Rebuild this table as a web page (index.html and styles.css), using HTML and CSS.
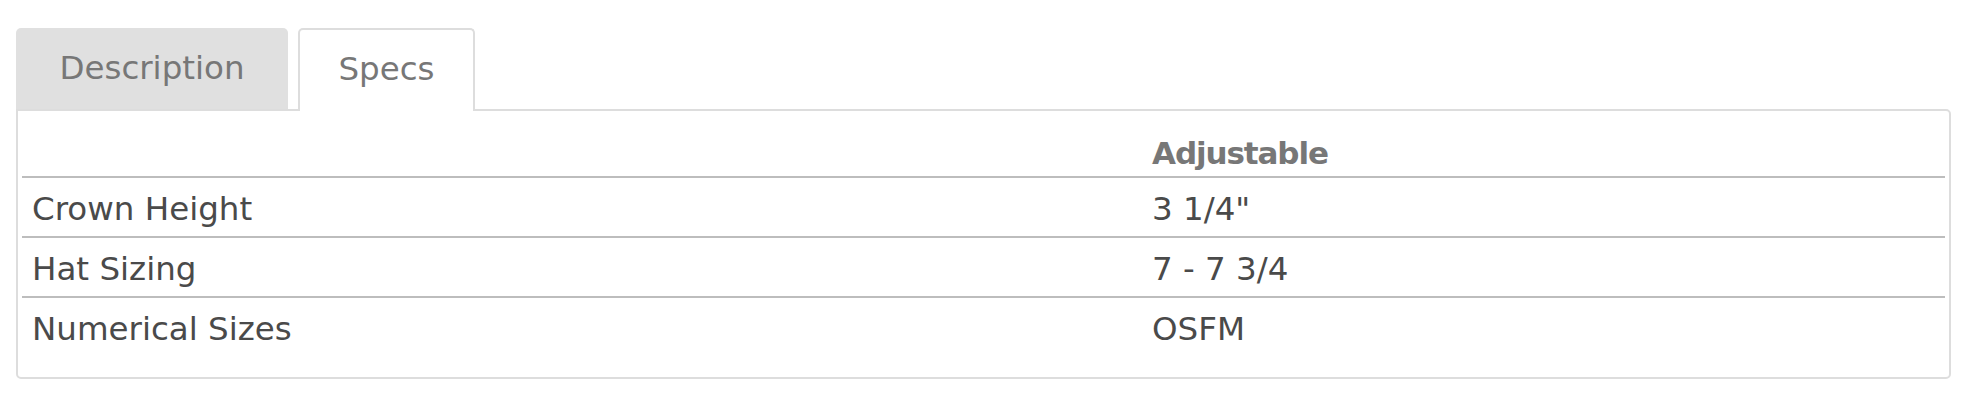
FILE: index.html
```html
<!DOCTYPE html>
<html lang="en">
<head>
<meta charset="utf-8">
<title>Specs</title>
<link rel="stylesheet" href="styles.css">
</head>
<body>
<div class="product-tabs">
  <ul class="tab-list">
    <li class="tab">Description</li>
    <li class="tab tab-active">Specs</li>
  </ul>
  <div class="tab-panel">
    <table class="spec-table">
      <thead>
        <tr><th class="col-label"></th><th class="col-value">Adjustable</th></tr>
      </thead>
      <tbody>
        <tr><td>Crown Height</td><td>3 1/4"</td></tr>
        <tr><td>Hat Sizing</td><td>7 - 7 3/4</td></tr>
        <tr><td>Numerical Sizes</td><td>OSFM</td></tr>
      </tbody>
    </table>
  </div>
</div>
</body>
</html>
```
FILE: styles.css
```css
html, body {
  margin: 0;
  padding: 0;
  background: #ffffff;
}
body {
  font-family: "DejaVu Sans", "Open Sans", sans-serif;
}
.product-tabs {
  padding: 28px 19px 0 16px;
}
.tab-list {
  list-style: none;
  margin: 0;
  padding: 0;
  display: flex;
  gap: 10px;
  align-items: flex-end;
  position: relative;
  z-index: 1;
  margin-bottom: -2px;
}
.tab {
  box-sizing: border-box;
  height: 83px;
  display: flex;
  align-items: center;
  justify-content: center;
  font-size: 32.5px;
  color: #777777;
  border-radius: 5px 5px 0 0;
}
.tab:first-child {
  width: 272px;
  background: #e0e0e0;
  height: 81px;
  margin-bottom: 2px;
  padding-bottom: 1px;
}
.tab-active {
  width: 177px;
  background: #ffffff;
  border: 2px solid #dddddd;
  border-bottom: none;
  padding-bottom: 4px;
}
.tab-panel {
  border: 2px solid #dddddd;
  border-radius: 0 5px 5px 5px;
  padding: 6px 4px 20px 4px;
  background: #ffffff;
}
.spec-table {
  width: 100%;
  border-collapse: collapse;
  font-size: 32.5px;
  color: #4a4a4a;
}
.spec-table th {
  text-align: left;
  font-size: 31px;
  font-weight: 700;
  color: #777777;
  height: 60px;
  padding: 0 10px 5px 10px;
  vertical-align: bottom;
  border-bottom: 2px solid #bdbdbd;
  box-sizing: border-box;
  letter-spacing: -1.1px;
}
.spec-table .col-label {
  width: 1120px;
}
.spec-table td {
  height: 60px;
  padding: 3px 10px 0 10px;
  vertical-align: middle;
  box-sizing: border-box;
}
.spec-table tbody tr + tr td {
  border-top: 2px solid #bdbdbd;
}
```
